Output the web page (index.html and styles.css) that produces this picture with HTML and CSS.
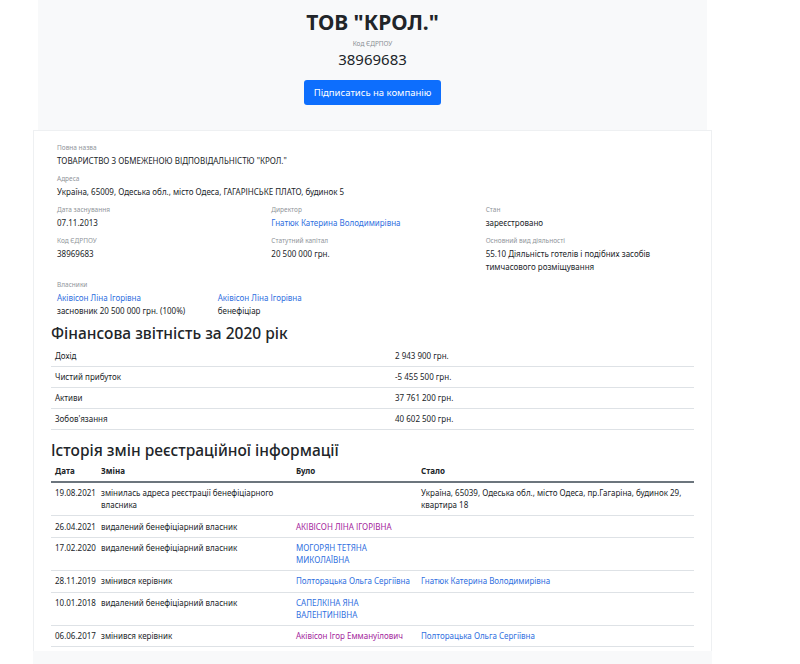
FILE: index.html
```html
<!DOCTYPE html>
<html lang="uk">
<head>
<meta charset="utf-8">
<title>ТОВ "КРОЛ."</title>
<link rel="stylesheet" href="styles.css">
</head>
<body>
<div class="page">
  <header class="hero">
    <h1 class="title">ТОВ "КРОЛ."</h1>
    <div class="code-label">Код ЄДРПОУ</div>
    <div class="code">38969683</div>
    <button class="btn">Підписатись на компанію</button>
  </header>

  <main class="card">
    <section class="info">
      <div class="field full">
        <div class="label">Повна назва</div>
        <div class="value">ТОВАРИСТВО З ОБМЕЖЕНОЮ ВІДПОВІДАЛЬНІСТЮ "КРОЛ."</div>
      </div>
      <div class="field full">
        <div class="label">Адреса</div>
        <div class="value">Україна, 65009, Одеська обл., місто Одеса, ГАГАРІНСЬКЕ ПЛАТО, будинок 5</div>
      </div>
      <div class="field">
        <div class="label">Дата заснування</div>
        <div class="value">07.11.2013</div>
      </div>
      <div class="field">
        <div class="label">Директор</div>
        <div class="value"><a class="link" href="#">Гнатюк Катерина Володимирівна</a></div>
      </div>
      <div class="field">
        <div class="label">Стан</div>
        <div class="value">зареєстровано</div>
      </div>
      <div class="field">
        <div class="label">Код ЄДРПОУ</div>
        <div class="value">38969683</div>
      </div>
      <div class="field">
        <div class="label">Статутний капітал</div>
        <div class="value">20 500 000 грн.</div>
      </div>
      <div class="field">
        <div class="label">Основний вид діяльності</div>
        <div class="value">55.10 Діяльність готелів і подібних засобів<br>тимчасового розміщування</div>
      </div>
    </section>

    <section class="owners">
      <div class="label owners-label">Власники</div>
      <div class="owner-grid">
        <div class="owner">
          <div class="value"><a class="link" href="#">Аківісон Ліна Ігорівна</a></div>
          <div class="value">засновник 20 500 000 грн. (100%)</div>
        </div>
        <div class="owner">
          <div class="value"><a class="link" href="#">Аківісон Ліна Ігорівна</a></div>
          <div class="value">бенефіціар</div>
        </div>
      </div>
    </section>

    <h2 class="section-title">Фінансова звітність за 2020 рік</h2>
    <table class="fin">
      <tbody>
        <tr><td class="fin-name">Дохід</td><td>2 943 900 грн.</td></tr>
        <tr><td class="fin-name">Чистий прибуток</td><td>-5 455 500 грн.</td></tr>
        <tr><td class="fin-name">Активи</td><td>37 761 200 грн.</td></tr>
        <tr><td class="fin-name">Зобов'язання</td><td>40 602 500 грн.</td></tr>
      </tbody>
    </table>

    <h2 class="section-title history-title">Історія змін реєстраційної інформації</h2>
    <table class="hist">
      <thead>
        <tr><th class="c-date">Дата</th><th class="c-change">Зміна</th><th class="c-was">Було</th><th>Стало</th></tr>
      </thead>
      <tbody>
        <tr>
          <td>19.08.2021</td>
          <td>змінилась адреса реєстрації бенефіціарного<br>власника</td>
          <td></td>
          <td>Україна, 65039, Одеська обл., місто Одеса, пр.Гагаріна, будинок 29,<br>квартира 18</td>
        </tr>
        <tr>
          <td>26.04.2021</td>
          <td>видалений бенефіціарний власник</td>
          <td><a class="link visited" href="#">АКІВІСОН ЛІНА ІГОРІВНА</a></td>
          <td></td>
        </tr>
        <tr>
          <td>17.02.2020</td>
          <td>видалений бенефіціарний власник</td>
          <td><a class="link" href="#">МОГОРЯН ТЕТЯНА<br>МИКОЛАЇВНА</a></td>
          <td></td>
        </tr>
        <tr>
          <td>28.11.2019</td>
          <td>змінився керівник</td>
          <td><a class="link" href="#">Полторацька Ольга Сергіївна</a></td>
          <td><a class="link" href="#">Гнатюк Катерина Володимирівна</a></td>
        </tr>
        <tr>
          <td>10.01.2018</td>
          <td>видалений бенефіціарний власник</td>
          <td><a class="link" href="#">САПЕЛКІНА ЯНА<br>ВАЛЕНТИНІВНА</a></td>
          <td></td>
        </tr>
        <tr>
          <td>06.06.2017</td>
          <td>змінився керівник</td>
          <td><a class="link visited" href="#">Аківісон Ігор Еммануїлович</a></td>
          <td><a class="link" href="#">Полторацька Ольга Сергіївна</a></td>
        </tr>
      </tbody>
    </table>
  </main>
  <div class="band"></div>
</div>
</body>
</html>
```

FILE: styles.css
```css
* { box-sizing: border-box; }

body {
  margin: 0;
  background: #ffffff;
  color: #212529;
  font-family: "Noto Sans", "Open Sans", sans-serif;
}

.page {
  width: 679px;
  margin-left: 33px;
}

.hero {
  margin: 0 5px;
  background: #f8f9fa;
  padding: 8px 0 25px;
  text-align: center;
}

.title {
  margin: 0;
  font-size: 21px;
  line-height: 28px;
  font-weight: 700;
}

.code-label {
  font-size: 6.5px;
  line-height: 10px;
  color: #8a8f94;
  margin-top: 3px;
}

.code {
  font-size: 15px;
  line-height: 20px;
  font-weight: 400;
}

.btn {
  display: block;
  margin: 11px auto 0;
  height: 25px;
  padding: 0 10px;
  border: 0;
  border-radius: 3px;
  background: #0d6efd;
  color: #ffffff;
  font-family: inherit;
  font-size: 9.5px;
  cursor: pointer;
}

.card {
  background: #ffffff;
  border: 1px solid #eef0f2;
  border-bottom: 0;
  padding: 5px 17px 4px;
}

.info {
  display: grid;
  grid-template-columns: repeat(3, 1fr);
}

.field {
  padding-left: 6px;
  margin-top: 6px;
}

.full { grid-column: 1 / -1; }

.label {
  font-size: 6.5px;
  line-height: 12px;
  color: #90959a;
}

.value {
  font-size: 8px;
  line-height: 13px;
}

.link {
  color: #2f6fe0;
  text-decoration: none;
}

.link.visited { color: #a3259c; }

.owners {
  margin-top: 6px;
}

.owners-label { padding-left: 6px; }

.owner-grid {
  display: grid;
  grid-template-columns: repeat(4, 1fr);
}

.owner { padding-left: 6px; }

.section-title {
  margin: 6px 0 3px;
  font-size: 15.5px;
  line-height: 20px;
  font-weight: 500;
}

.history-title { margin-top: 10px; margin-bottom: 1px; }

table {
  width: 100%;
  border-collapse: collapse;
  table-layout: fixed;
  font-size: 8px;
  line-height: 12px;
}

td, th {
  padding: 4px 4px;
  text-align: left;
  vertical-align: top;
  border-bottom: 1px solid #dee2e6;
}

.hist td {
  padding: 4.2px 4px 4.2px;
}

.fin-name { width: 340px; }

.hist th {
  font-weight: 700;
  padding: 4px 4px 4px;
  border-bottom: 2px solid #6c757d;
}

.c-date { width: 46px; }
.c-change { width: 195px; }
.c-was { width: 125px; }

.band {
  height: 30px;
  background: #f8f9fa;
}
```
